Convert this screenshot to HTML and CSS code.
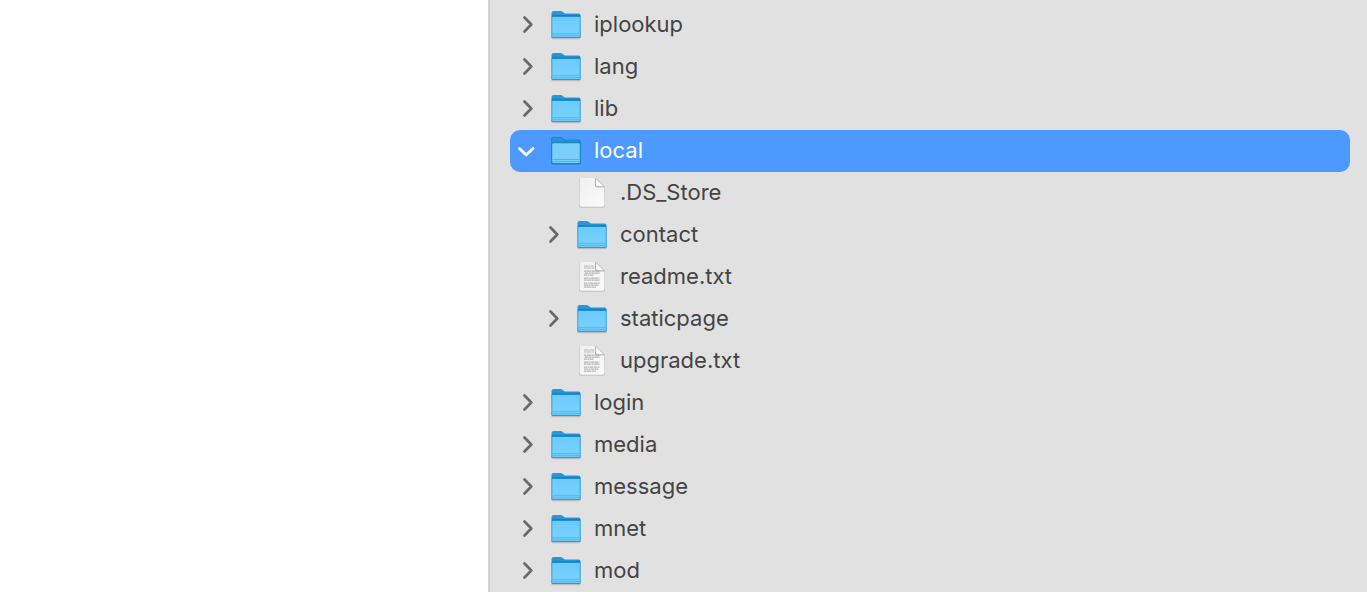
FILE: index.html
```html
<!DOCTYPE html>
<html lang="en">
<head>
<meta charset="utf-8">
<title>Files</title>
<link rel="stylesheet" href="styles.css">
</head>
<body>
<svg class="sprites" aria-hidden="true">
  <defs>
    <linearGradient id="folder-back" x1="0" y1="0" x2="0" y2="1">
      <stop offset="0" stop-color="#2a9ddb"/><stop offset=".14" stop-color="#2394d4"/><stop offset=".18" stop-color="#0a78c4"/><stop offset="1" stop-color="#0a78c4"/>
    </linearGradient>
    <linearGradient id="folder-front" x1="0" y1="0" x2="0" y2="1">
      <stop offset="0" stop-color="#6bcbfb"/><stop offset=".7" stop-color="#76d0ff"/><stop offset="1" stop-color="#66c4f8"/>
    </linearGradient>
    <linearGradient id="paper" x1="0" y1="0" x2="1" y2="1">
      <stop offset="0" stop-color="#f0f0f0"/><stop offset="1" stop-color="#fafafa"/>
    </linearGradient>
  </defs>
  <symbol id="right" viewBox="0 0 24 24"><path d="M8.500 4.500l6.800 7-6.800 7" fill="none" stroke="#696969" stroke-width="2.700" stroke-linecap="round" stroke-linejoin="round"/></symbol>
  <symbol id="down" viewBox="0 0 24 24"><path d="M3.500 9.500l6.700 6.500 6.700-6.500" fill="none" stroke="#fff" stroke-width="2.800" stroke-linecap="round" stroke-linejoin="round"/></symbol>
  <symbol id="folder" viewBox="0 0 32 32">
    <path d="M1 28V8h30v20q0 2.300-2 2.300H3q-2 0-2-2.300z" fill="#777" opacity=".35"/>
    <path d="M1.500 27V4q0-2 2-2h7.300q1 0 1.800.8l1.200 1q.6.600 1.600.6h13.300q1.800 0 1.800 1.800V27q0 1.700-1.700 1.700H3.200Q1.500 28.700 1.500 27z" fill="url(#folder-back)"/>
    <path d="M1.500 9q0-1.200 1.200-1.200h26.600q1.200 0 1.200 1.200v18.500q0 1.500-1.500 1.500H3q-1.500 0-1.500-1.500z" fill="url(#folder-front)"/>
    <path d="M2 8v19.500M30 8v19.500" stroke="#4db1e6" stroke-width="1"/>
    <path d="M2 24.500h28M2 26.500h28" stroke="#5bbcf0" stroke-width="1"/>
    <path d="M1.500 26.500v1q0 1.500 1.500 1.500h26q1.500 0 1.500-1.500v-1q0 1.400-1.500 1.400H3q-1.500 0-1.500-1.400z" fill="#329bd5"/>
  </symbol>
  <symbol id="folder-active" viewBox="0 0 32 32">
    <path d="M1 27.500V4q0-2 2-2h7.800q1 0 1.800.8l1.200 1q.6.600 1.600.6h13.600q2 0 2 2v21.100q0 2-2 2H3q-2 0-2-2z" fill="#1d85c6"/>
    <path d="M2 4.200q0-1.200 1.200-1.200h7.600q.7 0 1.300.6l1.600 1.300q.5.500 1.300.5h13q1.500 0 1.500 1.400H2z" fill="#2a93d2"/>
    <path d="M2.200 9.500q0-1.200 1.200-1.200h25.200q1.200 0 1.200 1.200v17.300q0 1.200-1.200 1.200H3.400q-1.200 0-1.200-1.200z" fill="#79cffa"/>
    <path d="M2.200 24.500h27.600M2.200 26.500h27.600" stroke="#55b4e3" stroke-width="1"/>
  </symbol>
  <symbol id="paper-sheet" viewBox="0 0 32 32">
    <path d="M3 3.500q0-2 2-2h15l9 8.500v18.500q0 2-2 2H5q-2 0-2-2z" fill="#999" opacity=".6"/>
    <path d="M3.500 3q0-2 2-2H19.500l9 9v18q0 1.700-1.700 1.700H5.200Q3.500 29.700 3.500 28z" fill="url(#paper)"/>
    <path d="M19.500 1h9v8.500z" fill="#e1e1e1"/>
    <path d="M19 1l1.500.5 7.500 7.500.5 1.500h-7.500q-2 0-2-2z" fill="#b5b5b5"/>
    <path d="M20 2L27.500 9.300h-5.700Q20 9.300 20 7.500z" fill="#f8f8f8"/>
  </symbol>
  <symbol id="blank" viewBox="0 0 32 32"><use href="#paper-sheet"/></symbol>
  <symbol id="text" viewBox="0 0 32 32">
    <use href="#paper-sheet"/>
    <g fill="none" stroke="#b4b4b4" stroke-width="1.200">
      <path d="M8 5h10.500M8.500 12.200h15.500M8 17.200h15.500M8 24.200h15" stroke-dasharray="4 .5 2 .5 3 .4"/>
      <path d="M8 7h10M8 10.200h16M8 19.200h16M8 26.200h12" stroke-dasharray="2 .4 5 .5"/>
      <path d="M8 14.200h10M8 22.200h16" stroke-dasharray="3 .5 1.500 .4 4 .5"/>
    </g>
  </symbol>
</svg>
<main class="browser">
  <section class="preview" aria-label="Preview"></section>
  <nav class="files" aria-label="Files">
    <ul class="tree">
      <li><div class="row"><button class="toggle" aria-label="Expand iplookup"><svg><use href="#right"/></svg></button><svg class="icon"><use href="#folder"/></svg><span class="name">iplookup</span></div></li>
      <li><div class="row"><button class="toggle" aria-label="Expand lang"><svg><use href="#right"/></svg></button><svg class="icon"><use href="#folder"/></svg><span class="name">lang</span></div></li>
      <li><div class="row"><button class="toggle" aria-label="Expand lib"><svg><use href="#right"/></svg></button><svg class="icon"><use href="#folder"/></svg><span class="name">lib</span></div></li>
      <li>
        <div class="row selected"><button class="toggle" aria-label="Collapse local" aria-expanded="true"><svg><use href="#down"/></svg></button><svg class="icon"><use href="#folder-active"/></svg><span class="name">local</span></div>
        <ul class="tree nested">
          <li><div class="row"><span class="toggle"></span><svg class="icon"><use href="#blank"/></svg><span class="name">.DS_Store</span></div></li>
          <li><div class="row"><button class="toggle" aria-label="Expand contact"><svg><use href="#right"/></svg></button><svg class="icon"><use href="#folder"/></svg><span class="name">contact</span></div></li>
          <li><div class="row"><span class="toggle"></span><svg class="icon"><use href="#text"/></svg><span class="name">readme.txt</span></div></li>
          <li><div class="row"><button class="toggle" aria-label="Expand staticpage"><svg><use href="#right"/></svg></button><svg class="icon"><use href="#folder"/></svg><span class="name">staticpage</span></div></li>
          <li><div class="row"><span class="toggle"></span><svg class="icon"><use href="#text"/></svg><span class="name">upgrade.txt</span></div></li>
        </ul>
      </li>
      <li><div class="row"><button class="toggle" aria-label="Expand login"><svg><use href="#right"/></svg></button><svg class="icon"><use href="#folder"/></svg><span class="name">login</span></div></li>
      <li><div class="row"><button class="toggle" aria-label="Expand media"><svg><use href="#right"/></svg></button><svg class="icon"><use href="#folder"/></svg><span class="name">media</span></div></li>
      <li><div class="row"><button class="toggle" aria-label="Expand message"><svg><use href="#right"/></svg></button><svg class="icon"><use href="#folder"/></svg><span class="name">message</span></div></li>
      <li><div class="row"><button class="toggle" aria-label="Expand mnet"><svg><use href="#right"/></svg></button><svg class="icon"><use href="#folder"/></svg><span class="name">mnet</span></div></li>
      <li><div class="row"><button class="toggle" aria-label="Expand mod"><svg><use href="#right"/></svg></button><svg class="icon"><use href="#folder"/></svg><span class="name">mod</span></div></li>
    </ul>
  </nav>
</main>
</body>
</html>
```
FILE: styles.css
```css
* { box-sizing: border-box; }

body {
  margin: 0;
  background: #fff;
  color: #444;
  font-family: Inter, "Liberation Sans", sans-serif;
  font-size: 22px;
  line-height: 28px;
}

.sprites {
  position: absolute;
  width: 0;
  height: 0;
}

.browser {
  display: flex;
  min-height: 100vh;
}

.preview { flex: 0 0 488px; }

.files {
  flex: 1;
  min-width: 0;
  padding: 4px 17px 0 20px;
  border-left: 2px solid #d2d2d2;
  background: #e1e1e1;
}

.tree {
  margin: 0;
  padding: 0;
  list-style: none;
}

.nested { padding-left: 26px; }

.row {
  display: flex;
  align-items: center;
  padding: 5px 6px;
  border-radius: 10px;
}

.selected {
  background: #4c99ff;
  color: #fff;
}

.toggle {
  flex: none;
  width: 24px;
  height: 24px;
  margin-right: 10px;
  padding: 0;
  border: 0;
  background: none;
}

.toggle svg {
  display: block;
  width: 24px;
  height: 24px;
}

.icon {
  flex: none;
  width: 32px;
  height: 32px;
  margin-right: 12px;
}

.name {
  padding-bottom: 3px;
  white-space: nowrap;
}
```
